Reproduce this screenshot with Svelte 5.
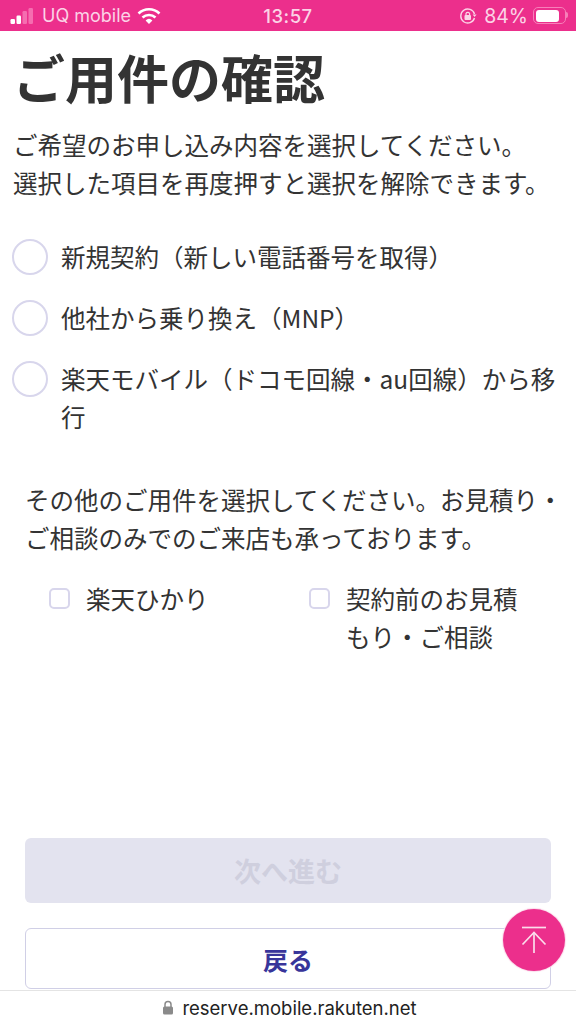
<script lang="ts">
  const mains = [
    "新規契約（新しい電話番号を取得）",
    "他社から乗り換え（MNP）",
    "楽天モバイル（ドコモ回線・au回線）から移行",
  ];
  const others = ["楽天ひかり", "契約前のお見積もり・ご相談"];
</script>

<div class="page">
  <header class="status">
    <div class="side left">
      <svg class="signal" width="26" height="18" viewBox="0 0 26 18">
        <rect x="0.5" y="12" width="4.5" height="5" rx="1.2" fill="#fff" />
        <rect x="6.5" y="8.5" width="4.5" height="8.5" rx="1.2" fill="#fff" />
        <rect x="12.5" y="4" width="4.5" height="13" rx="1.2" fill="#f56db0" />
        <rect x="18.5" y="1" width="4.5" height="16" rx="1.2" fill="#f56db0" />
      </svg>
      <span>UQ mobile</span>
      <svg class="wifi" width="24" height="18" viewBox="0 0 24 18" fill="none" stroke="#fff" stroke-width="2.6">
        <path d="M1.5 6.5a15 15 0 0 1 21 0" />
        <path d="M5.5 10.5a9.5 9.5 0 0 1 13 0" />
        <path d="M12 17l-3.4-3.6a5 5 0 0 1 6.8 0z" fill="#fff" stroke="none" />
      </svg>
    </div>
    <div class="time">13:57</div>
    <div class="side right">
      <svg width="18" height="18" viewBox="0 0 18 18" fill="none" stroke="#fbd3e6" stroke-width="1.4">
        <path d="M15.5 11a7 7 0 1 1 0-4" />
        <path d="M17.6 7.6h-4l2 2.4z" fill="#fbd3e6" stroke="none" />
        <rect x="5.5" y="8" width="6.5" height="5" rx="1" fill="#fbd3e6" stroke="none" />
        <path d="M7 8V6.5a2 2 0 0 1 3.6 0V8" stroke-width="1.2" />
      </svg>
      <span class="pct">84%</span>
      <div class="battery"><div class="level" style="width: 84%"></div></div>
    </div>
  </header>

  <main class="content">
    <h1>ご用件の確認</h1>
    <p class="lead">ご希望のお申し込み内容を選択してください。<br />選択した項目を再度押すと選択を解除できます。</p>

    <div class="radios">
      {#each mains as label}
        <div class="radio-row">
          <span class="circle"></span>
          <span class="label">{label}</span>
        </div>
      {/each}
    </div>

    <p class="other">その他のご用件を選択してください。お見積り・ご相談のみでのご来店も承っております。</p>

    <div class="checks">
      {#each others as label}
        <div class="check-row">
          <span class="box"></span>
          <span class="label">{label}</span>
        </div>
      {/each}
    </div>

    <div class="actions">
      <button class="next" type="button">次へ進む</button>
      <button class="back" type="button">戻る</button>
    </div>
  </main>

  <footer class="urlbar">
    <svg width="12" height="15" viewBox="0 0 12 15">
      <path d="M3 7V4.5a3 3 0 0 1 6 0V7" fill="none" stroke="#8a8a8a" stroke-width="1.5" />
      <rect x="1" y="6.5" width="10" height="8" rx="1.5" fill="#8a8a8a" />
    </svg>
    <span>reserve.mobile.rakuten.net</span>
  </footer>

  <button class="fab" type="button" aria-label="top">
    <svg width="26" height="28" viewBox="0 0 26 28" fill="none" stroke="#fbdceb" stroke-width="1.7">
      <path d="M1 1.5h24" />
      <path d="M13 27V6.5" />
      <path d="M1.5 18.5L13 6.5l11.5 12" />
    </svg>
  </button>
</div>

<style>
  :global(body) {
    margin: 0;
    background: #fff;
  }
  .page {
    position: relative;
    width: 576px;
    height: 1024px;
    overflow: hidden;
    display: flex;
    flex-direction: column;
    color: #333;
    font-family: "Noto Sans CJK JP", "Noto Sans", sans-serif;
  }
  .status {
    flex: none;
    height: 31px;
    background: #ec2f8c;
    color: #fbd3e6;
    display: grid;
    grid-template-columns: 1fr auto 1fr;
    align-items: center;
    padding: 0 8px 0 10px;
    font-family: Inter, "Liberation Sans", sans-serif;
    font-size: 18px;
  }
  .side {
    display: flex;
    align-items: center;
    gap: 6px;
  }
  .right {
    justify-content: flex-end;
    gap: 5px;
  }
  .time {
    font-size: 18.5px;
    font-weight: 500;
    letter-spacing: 0.5px;
    margin-left: -2px;
  }
  .pct {
    font-size: 19.5px;
    margin-left: 2px;
  }
  .battery {
    position: relative;
    width: 33px;
    height: 17px;
    margin-right: 2px;
    border: 1px solid #f77fb9;
    border-radius: 5px;
    padding: 1.5px;
    box-sizing: border-box;
  }
  .battery::after {
    content: "";
    position: absolute;
    right: -3px;
    top: 4px;
    width: 2px;
    height: 6px;
    border-radius: 0 2px 2px 0;
    background: #f77fb9;
  }
  .level {
    height: 100%;
    background: #fff;
    border-radius: 3px;
  }
  .content {
    flex: 1;
    display: flex;
    flex-direction: column;
    min-height: 0;
  }
  h1 {
    margin: 8px 0 0 13px;
    font-size: 52px;
    line-height: 76px;
    font-weight: 700;
  }
  .lead {
    margin: 11px 0 0 13px;
    font-size: 24.5px;
    line-height: 38px;
  }
  .radios {
    margin: 36px 0 0 12px;
    display: flex;
    flex-direction: column;
    gap: 23px;
  }
  .radio-row {
    display: flex;
    align-items: flex-start;
    gap: 13px;
    padding-right: 14px;
  }
  .circle {
    flex: none;
    width: 36px;
    height: 36px;
    margin-top: 1px;
    box-sizing: border-box;
    border: 2px solid #d8d6ec;
    border-radius: 50%;
  }
  .label {
    font-size: 24.5px;
    line-height: 38px;
  }
  .other {
    margin: 45px 8px 0 25px;
    font-size: 24.5px;
    line-height: 38px;
  }
  .checks {
    margin: 23px 0 0 49px;
    display: grid;
    grid-template-columns: 260px 210px;
  }
  .check-row {
    display: flex;
    align-items: flex-start;
    gap: 16px;
  }
  .box {
    flex: none;
    width: 21px;
    height: 21px;
    margin-top: 8px;
    box-sizing: border-box;
    border: 2px solid #d8d6ec;
    border-radius: 5px;
  }
  .actions {
    margin-top: auto;
    padding: 0 25px 1px;
    display: flex;
    flex-direction: column;
    gap: 25px;
  }
  button {
    font-family: inherit;
    padding: 0;
  }
  .next,
  .back {
    width: 100%;
    border-radius: 6px;
    font-weight: 700;
  }
  .next {
    height: 65px;
    border: 0;
    background: #e3e3ef;
    color: #cfcfde;
    font-size: 27px;
  }
  .back {
    height: 61px;
    border: 1.5px solid #d0cfe6;
    background: #fff;
    color: #38359a;
    font-size: 25px;
  }
  .urlbar {
    flex: none;
    height: 34px;
    box-sizing: border-box;
    border-top: 1px solid #e4e4e4;
    padding-left: 3px;
    background: #fff;
    display: flex;
    align-items: center;
    justify-content: center;
    gap: 8px;
    color: #222;
    font-family: Inter, "Liberation Sans", sans-serif;
    font-size: 18.5px;
  }
  .fab {
    position: absolute;
    left: 503px;
    top: 908.5px;
    width: 62px;
    height: 62px;
    border: 0;
    border-radius: 50%;
    background: #ec2f8c;
    box-shadow: 0 0 1px 1px #fbdceb;
    display: flex;
    align-items: center;
    justify-content: center;
  }
</style>
